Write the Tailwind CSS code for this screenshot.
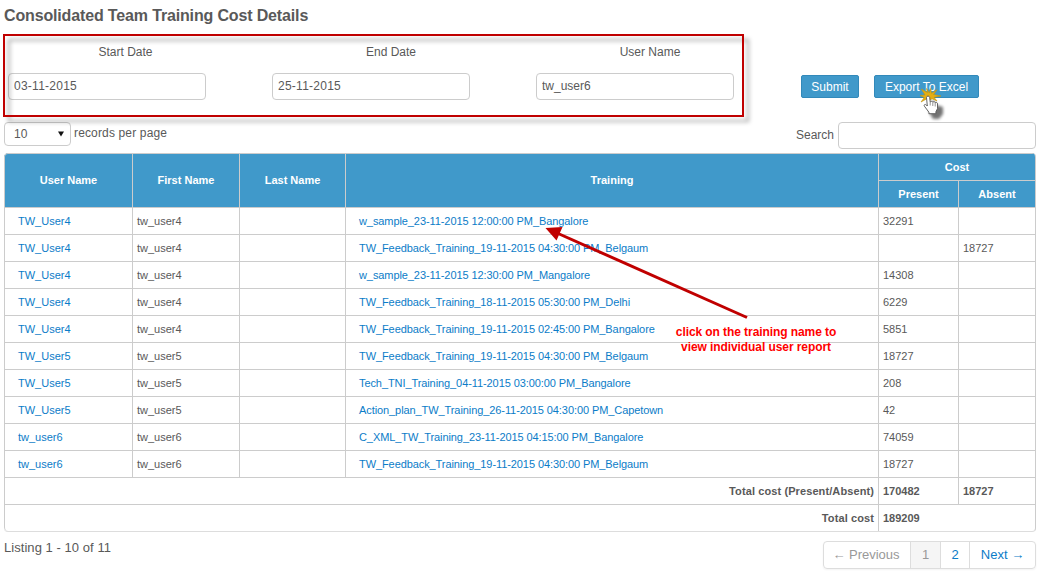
<!DOCTYPE html>
<html lang="en">
<head>
<meta charset="utf-8">
<title>Consolidated Team Training Cost Details</title>
<script src="https://cdn.jsdelivr.net/npm/@tailwindcss/browser@4"></script>
</head>
<body class="relative h-[577px] w-[1043px] overflow-hidden bg-white pl-1 font-['Liberation_Sans',Arial,sans-serif] text-[12px] leading-4 text-[#595959]">
<h1 class="h-[34px] pt-[6px] text-[16px] leading-5 font-bold tracking-[-0.15px]">Consolidated Team Training Cost Details</h1>

<form class="relative flex h-[88px] pl-1">
  <div class="pointer-events-none absolute top-0 -left-px h-[83px] w-[741px] border-2 border-[#c00000] drop-shadow-[5px_5px_2px_rgba(0,0,0,0.35)]"></div>
  <label class="block w-[264px]"><span class="block w-[235px] pt-[10px] text-center">Start Date</span>
    <input class="mt-[13px] block h-[27px] w-[198px] rounded-[4px] border border-[#ccc] px-[5px] pb-[2px] tracking-[0.25px]" value="03-11-2015"></label>
  <label class="block w-[264px]"><span class="block w-[238px] pt-[10px] text-center">End Date</span>
    <input class="mt-[13px] block h-[27px] w-[198px] rounded-[4px] border border-[#ccc] px-[5px] pb-[2px] tracking-[0.25px]" value="25-11-2015"></label>
  <label class="block w-[265px]"><span class="block w-[228px] pt-[10px] text-center">User Name</span>
    <input class="mt-[13px] block h-[27px] w-[198px] rounded-[4px] border border-[#ccc] px-[5px] pb-[2px]" value="tw_user6"></label>
  <div class="flex gap-[15px] pt-[41px] text-white">
    <button type="button" class="h-[23px] w-[58px] rounded-[2px] border border-[#3289ba] bg-[#4099ca]">Submit</button>
    <button type="button" class="h-[23px] w-[105px] rounded-[2px] border border-[#3289ba] bg-[#4099ca]">Export To Excel</button>
  </div>
</form>

<div class="flex h-[31px] w-[1032px] items-start">
  <div class="flex h-6 w-[67px] items-center justify-between rounded-[4px] border border-[#ccc] pr-[6px] pl-[9px]"><span>10</span>
    <svg class="h-[6px] w-[6px]" viewBox="0 0 7 6"><path d="M0 0h7L3.5 6z" fill="#111"/></svg></div>
  <span class="pt-[3px] pl-[3px] tracking-[0.15px]">records per page</span>
  <span class="ml-auto pt-[5px] pr-[4px]">Search</span>
  <input class="h-[27px] w-[198px] rounded-[4px] border border-[#ccc]">
</div>

<table class="w-[1032px] table-fixed border-separate border-spacing-0 overflow-hidden rounded-[4px] border-r border-b border-r-[#ccc] border-b-[#ddd] text-[11px] leading-4">
  <colgroup><col class="w-[128px]"><col class="w-[107px]"><col class="w-[106px]"><col class="w-[533px]"><col class="w-[80px]"><col class="w-[77px]"></colgroup>
  <thead class="bg-[#4099ca] text-white">
    <tr class="h-[27px]">
      <th rowspan="2" class="rounded-tl-[4px] border-t border-l border-[#ccc] p-0 pb-[2px]">User Name</th>
      <th rowspan="2" class="border-t border-l border-[#ccc] p-0 pb-[2px]">First Name</th>
      <th rowspan="2" class="border-t border-l border-[#ccc] p-0 pb-[2px]">Last Name</th>
      <th rowspan="2" class="border-t border-l border-[#ccc] p-0 pb-[2px]">Training</th>
      <th colspan="2" class="border-t border-l border-[#ccc] p-0">Cost</th>
    </tr>
    <tr class="h-[27px]">
      <th class="border-t border-l border-[#ccc] p-0">Present</th>
      <th class="border-t border-l border-[#ccc] p-0">Absent</th>
    </tr>
  </thead>
  <tbody id="rows"></tbody>
  <tfoot class="font-bold">
    <tr class="h-[27px]"><td colspan="4" class="border-t border-l border-[#ccc] p-0 pr-1 text-right tracking-[0.1px]">Total cost (Present/Absent)</td><td class="border-t border-l border-[#ccc] p-0 pl-1">170482</td><td class="border-t border-l border-[#ccc] p-0 pl-1">18727</td></tr>
    <tr class="h-[27px]"><td colspan="4" class="rounded-bl-[4px] border-t border-l border-[#ccc] p-0 pr-1 text-right tracking-[0.1px]">Total cost</td><td colspan="2" class="border-t border-l border-[#ccc] p-0 pl-1">189209</td></tr>
  </tfoot>
</table>

<div class="flex w-[1032px] justify-between text-[13px]">
  <span class="pt-[8px] tracking-[0.05px]">Listing 1 - 10 of 11</span>
  <nav class="mt-[9px] flex h-7 w-[213px] overflow-hidden rounded-[4px] border border-[#ddd] text-center leading-[26px] text-[#0b7cc8] shadow-[0_1px_2px_rgba(0,0,0,0.05)]">
    <span class="w-[86px] pr-[2px] text-[#999]">← Previous</span>
    <span class="w-[30px] border-l border-[#ddd] bg-[#f5f5f5] text-[#999]">1</span>
    <a class="w-[29px] border-l border-[#ddd]">2</a>
    <a class="w-[66px] border-l border-[#ddd]">Next →</a>
  </nav>
</div>

<svg class="pointer-events-none absolute top-0 left-0" width="1043" height="577" viewBox="0 0 1043 577">
  <path d="M747 317.500L557 233" stroke="#c00000" stroke-width="3" fill="none"/>
  <path d="M545.500 228L562.500 227L556.500 240.500z" fill="#c00000"/>
  <defs><filter id="soft" x="-50%" y="-50%" width="200%" height="200%"><feGaussianBlur stdDeviation="1.700"/></filter></defs>
  <path d="M930 98l3 6 7 2v7l-4 5h-6l-4-7z" transform="translate(3 1)" fill="#000" opacity=".55" filter="url(#soft)"/>
  <path d="M926.500 88.500l2.800 4.500 1.300-4.500 1 4.800 5.400-3.600-3.400 4.800 7.400 1.500-7 1.300 3 3.700-5-2.300-2.500 2-2.500-2-6 3.300 3.300-4.500-4.300-2 5-.5-3.800-6 6.300 3.500z" fill="#e3ad14" stroke="#c3960f" stroke-width=".6"/>
  <path d="M926.500 97.500c0-1.900 3-1.900 3.200 0l.5 4.500c.7-1 2.300-.8 2.600.2.800-.8 2.300-.5 2.500.5.900-.6 2.200-.1 2.200 1v5l-1.600 3v2h-7v-1.500l-4.500-6c-.9-1.400.8-2.400 2-1.200l.9 1z" fill="#fff" stroke="#555" stroke-width=".9"/>
  <path d="M930.200 102v3.500M932.800 102.500v3.500M935.200 103v3.500" stroke="#666" stroke-width=".7"/>
</svg>
<div class="absolute top-[325px] left-[656px] w-[200px] text-center text-[12px] leading-[15px] font-bold tracking-[-0.08px] text-[#f00]">click on the training name to<br>view individual user report</div>

<script>
const data = [
  ['TW_User4','tw_user4','w_sample_23-11-2015 12:00:00 PM_Bangalore','32291',''],
  ['TW_User4','tw_user4','TW_Feedback_Training_19-11-2015 04:30:00 PM_Belgaum','','18727'],
  ['TW_User4','tw_user4','w_sample_23-11-2015 12:30:00 PM_Mangalore','14308',''],
  ['TW_User4','tw_user4','TW_Feedback_Training_18-11-2015 05:30:00 PM_Delhi','6229',''],
  ['TW_User4','tw_user4','TW_Feedback_Training_19-11-2015 02:45:00 PM_Bangalore','5851',''],
  ['TW_User5','tw_user5','TW_Feedback_Training_19-11-2015 04:30:00 PM_Belgaum','18727',''],
  ['TW_User5','tw_user5','Tech_TNI_Training_04-11-2015 03:00:00 PM_Bangalore','208',''],
  ['TW_User5','tw_user5','Action_plan_TW_Training_26-11-2015 04:30:00 PM_Capetown','42',''],
  ['tw_user6','tw_user6','C_XML_TW_Training_23-11-2015 04:15:00 PM_Bangalore','74059',''],
  ['tw_user6','tw_user6','TW_Feedback_Training_19-11-2015 04:30:00 PM_Belgaum','18727','']
];
document.getElementById('rows').innerHTML = data.map(([user, first, training, present, absent]) => `
  <tr class="h-[27px]">
    <td class="border-t border-l border-[#ccc] p-0 pl-[13px] text-[#0b7cc8]">${user}</td>
    <td class="border-t border-l border-[#ccc] p-0 pl-1">${first}</td>
    <td class="border-t border-l border-[#ccc] p-0"></td>
    <td class="border-t border-l border-[#ccc] p-0 pl-[13px] tracking-[-0.085px] text-[#0b7cc8]">${training}</td>
    <td class="border-t border-l border-[#ccc] p-0 pl-1">${present}</td>
    <td class="border-t border-l border-[#ccc] p-0 pl-1">${absent}</td>
  </tr>`).join('');
</script>
</body>
</html>
